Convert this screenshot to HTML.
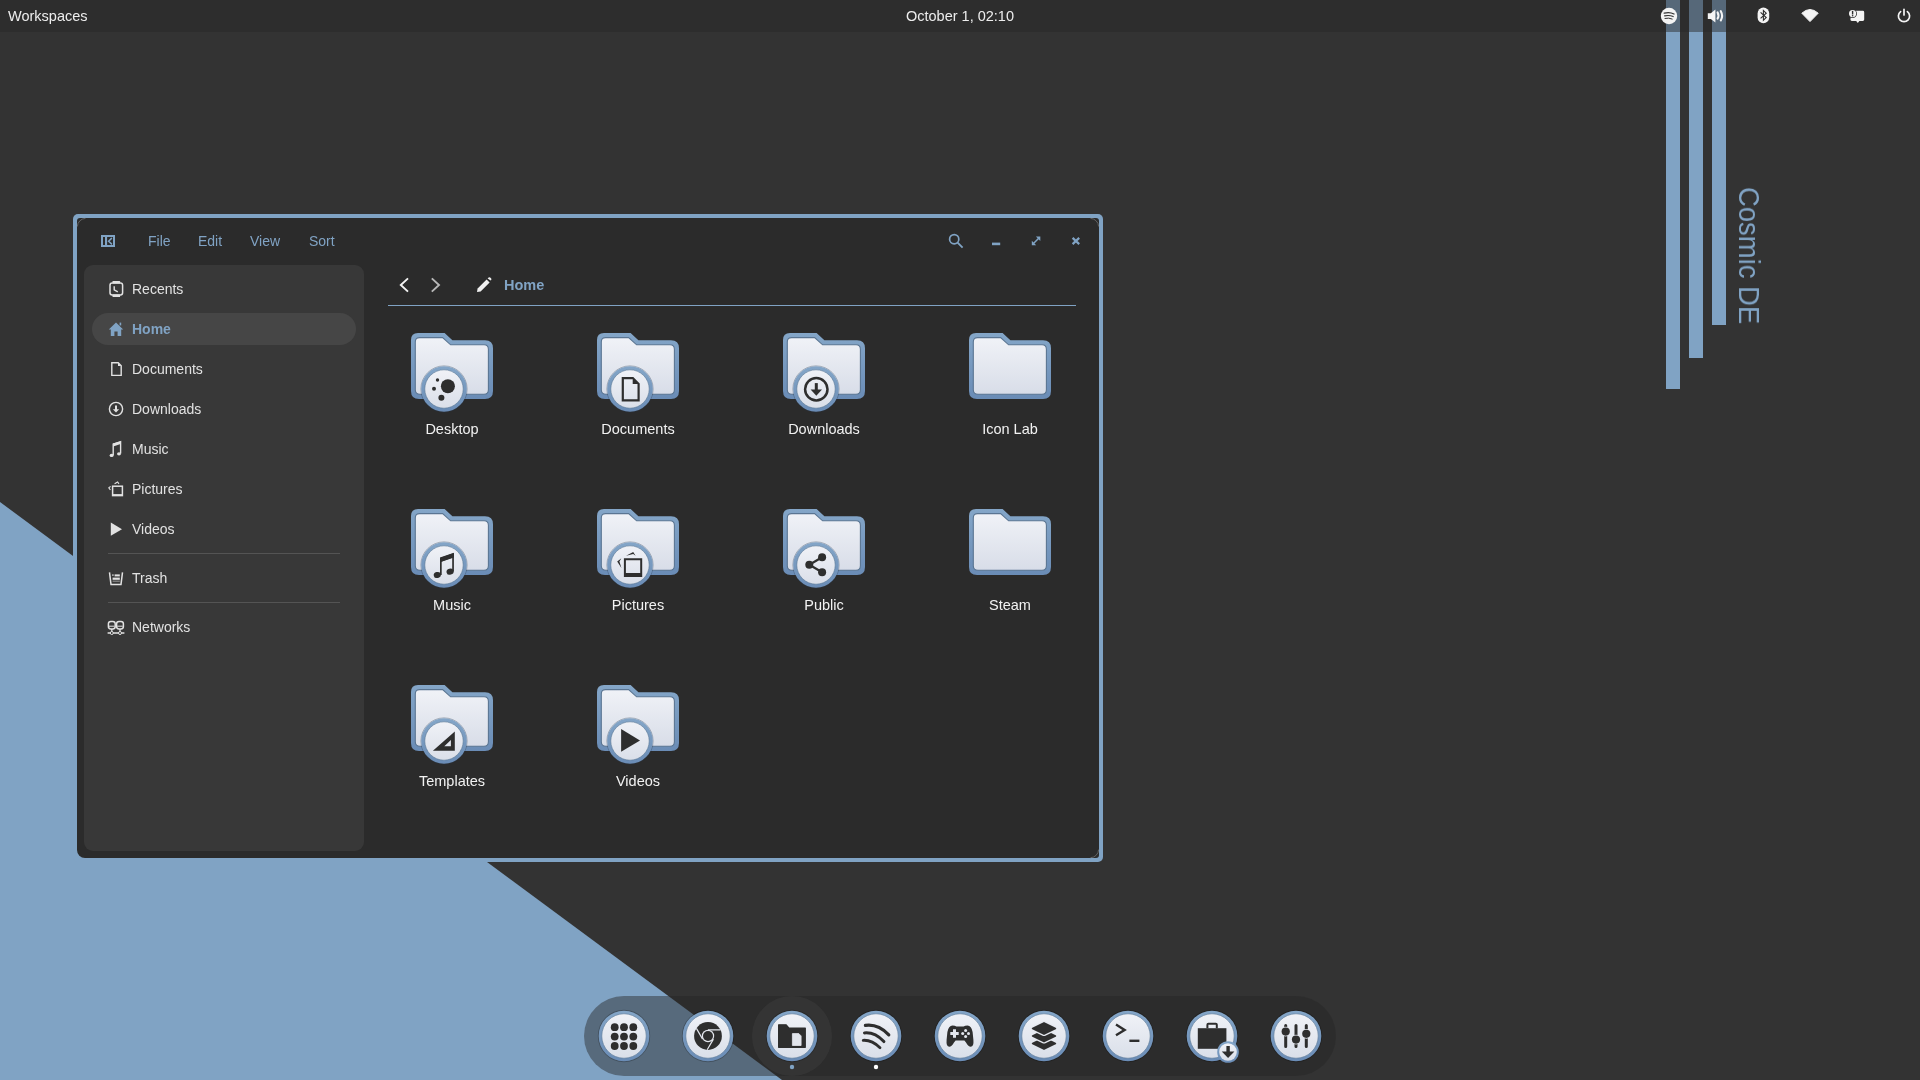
<!DOCTYPE html><html><head><meta charset="utf-8"><style>
*{margin:0;padding:0;box-sizing:border-box}
html,body{width:1920px;height:1080px;overflow:hidden;background:#333333;font-family:"Liberation Sans",sans-serif}
.tx{position:absolute;line-height:1;white-space:nowrap;will-change:transform}
svg{position:absolute;overflow:visible}
</style></head><body>
<svg style="left:0;top:0" width="1920" height="1080">
<polygon points="0,502 782,1080 0,1080" fill="#80a3c4"/>
<rect x="1666" y="0" width="14" height="389" fill="#80a3c4"/>
<rect x="1689" y="0" width="14" height="358" fill="#80a3c4"/>
<rect x="1712" y="0" width="14" height="325" fill="#80a3c4"/>
</svg>
<div class="tx" style="left:1762.5px;top:186.5px;font-size:29px;color:#80a3c4;transform-origin:0 0;transform:rotate(90deg) scaleX(0.946)">Cosmic DE</div>
<div style="position:absolute;left:0;top:0;width:1920px;height:32px;background:rgba(40,40,40,0.48)"></div>
<div class="tx" style="left:7.50px;top:8.93px;font-size:14.5px;color:#ededed;font-weight:normal;">Workspaces</div>
<div class="tx" style="left:0;width:1920px;text-align:center;top:8.93px;font-size:14.5px;color:#ededed">October 1, 02:10</div>
<svg style="left:0;top:0" width="1920" height="32">
<circle cx="1669" cy="16" r="8.2" fill="#f4f4f4"/>
<path d="M1664.2,13.2 Q1669.5,11.6 1674,14.0" stroke="#333" stroke-width="1.3" fill="none" stroke-linecap="round"/>
<path d="M1664.6,15.9 Q1669.2,14.7 1673.2,16.6" stroke="#333" stroke-width="1.1" fill="none" stroke-linecap="round"/>
<path d="M1665.0,18.4 Q1668.8,17.5 1672.2,19.0" stroke="#333" stroke-width="1.0" fill="none" stroke-linecap="round"/>
<path d="M1707.8,13.2 h3 l4.6,-3.6 v13 l-4.6,-3.6 h-3 z" fill="#f4f4f4"/>
<path d="M1717.6,12.4 q1.7,3.1 0,6.2" stroke="#f4f4f4" stroke-width="2.1" fill="none" stroke-linecap="round"/>
<path d="M1720.8,11.2 q2.6,4.6 0,9.2" stroke="#f4f4f4" stroke-width="2.1" fill="none" stroke-linecap="round"/>
<rect x="1757.6" y="7.6" width="11.6" height="15.6" rx="5.8" fill="#f4f4f4"/>
<path d="M1760.6,12.4 L1766.2,17.6 L1763.4,20.2 V10.6 L1766.2,13.2 L1760.6,18.4" stroke="#2e2e2e" stroke-width="1.1" fill="none" stroke-linejoin="miter"/>
<path d="M1801.8,13.2 Q1810,5.8 1818.2,13.2 L1810,21.6 Z" fill="#f4f4f4" stroke="#f4f4f4" stroke-width="1" stroke-linejoin="round"/>
<path d="M1851.4,12.2 a1.4,1.4 0 0 1 1.4,-1.4 h10 a1.4,1.4 0 0 1 1.4,1.4 v7.4 a1.4,1.4 0 0 1 -1.4,1.4 h-3.4 l-1.6,2 l-1.6,-2 h-4.4 a1.4,1.4 0 0 1 -1.4,-1.4 z" fill="#f4f4f4"/>
<circle cx="1852.6" cy="13.6" r="4.4" fill="#2e2e2e"/>
<circle cx="1852.6" cy="13.6" r="3.6" fill="#f4f4f4"/>
<rect x="1851.9" y="10.9" width="1.4" height="3.6" fill="#2e2e2e"/><rect x="1851.9" y="15.1" width="1.4" height="1.3" fill="#2e2e2e"/>
<path d="M1900.6,11.6 A5.6,5.6 0 1 0 1907.4,11.6" stroke="#f4f4f4" stroke-width="1.7" fill="none" stroke-linecap="round"/>
<path d="M1904,9.4 V15" stroke="#f4f4f4" stroke-width="1.7" stroke-linecap="round"/>
</svg>
<div style="position:absolute;left:73px;top:214px;width:1030px;height:648px;background:#80a3c4;border-radius:5px"></div>
<div style="position:absolute;left:77px;top:218px;width:1022px;height:640px;background:#2b2b2b;border-radius:3px 3px 3px 8px"></div>
<svg style="left:0;top:0" width="1" height="1"><path d="M77.4,226.5 A8.3,8.3 0 0 1 85.5,218.4" stroke="#6a6a6a" stroke-width="0.9" fill="none"/><path d="M1090.5,218.4 A8.3,8.3 0 0 1 1098.6,226.5" stroke="#6a6a6a" stroke-width="0.9" fill="none"/><path d="M1098.6,849.6 A8.3,8.3 0 0 1 1090.5,857.7" stroke="#6a6a6a" stroke-width="0.9" fill="none"/></svg>
<div style="position:absolute;left:84px;top:265px;width:280px;height:586px;background:#383838;border-radius:9px"></div>
<svg style="left:0;top:0" width="1" height="1">
<path d="M101,235 H115 V247 H101 Z M103,237 V245 H105 V237 Z M107.1,237 V245 H113 V237 Z" fill="#80a3c4" fill-rule="evenodd"/>
<path d="M111.5,238.4 L108.6,241.2 L111.5,243.9" stroke="#80a3c4" stroke-width="1.5" fill="none" stroke-linecap="round"/>
</svg>
<div class="tx" style="left:147.50px;top:234.15px;font-size:14px;color:#80a3c4;font-weight:normal;">File</div>
<div class="tx" style="left:198.00px;top:234.15px;font-size:14px;color:#80a3c4;font-weight:normal;">Edit</div>
<div class="tx" style="left:250.20px;top:234.15px;font-size:14px;color:#80a3c4;font-weight:normal;">View</div>
<div class="tx" style="left:308.80px;top:234.15px;font-size:14px;color:#80a3c4;font-weight:normal;">Sort</div>
<svg style="left:0;top:0" width="1" height="1">
<circle cx="954.2" cy="239.2" r="4.6" fill="none" stroke="#80a3c4" stroke-width="1.7"/>
<path d="M957.6,242.6 L962.6,247.6" stroke="#80a3c4" stroke-width="1.9"/>
<rect x="992" y="242.6" width="8.2" height="2.6" fill="#80a3c4"/>
<path d="M1033.2,243.8 L1039,238" stroke="#80a3c4" stroke-width="1.5"/>
<path d="M1031.8,240.8 V245.2 H1036.2 Z" fill="#80a3c4"/>
<path d="M1040.3,241 V236.6 H1035.9 Z" fill="#80a3c4"/>
<path d="M1072.6,237.9 L1079.2,244.1 M1079.2,237.9 L1072.6,244.1" stroke="#80a3c4" stroke-width="2.2"/>
</svg>
<div style="position:absolute;left:92px;top:313px;width:264px;height:32px;background:#464646;border-radius:16px"></div>
<svg style="left:0;top:0" width="1" height="1"><rect x="110" y="283" width="12.6" height="12" rx="2.2" fill="none" stroke="#e2e2e2" stroke-width="1.5"/><rect x="112.5" y="281" width="7.6" height="2.6" rx="0.6" fill="#e2e2e2"/><rect x="112.5" y="294.4" width="7.6" height="2.6" rx="0.6" fill="#e2e2e2"/><path d="M114.2,286.2 V289.8 L117.8,291.8" stroke="#e2e2e2" stroke-width="1.4" fill="none"/><path d="M108.8,329.4 L116,322.4 L123.2,329.4 H121.2 V336 H117.6 V331.6 H114.4 V336 H110.8 V329.4 Z" fill="#80a3c4"/><rect x="119.6" y="322.6" width="1.6" height="2.8" fill="#80a3c4"/><path d="M111.8,362.8 H118.2 L121.2,365.8 V375.4 H111.8 Z" fill="none" stroke="#e2e2e2" stroke-width="1.4"/><path d="M118,362.8 L121.2,366 H118 Z" fill="#e2e2e2"/><circle cx="116" cy="409" r="6.6" fill="none" stroke="#e2e2e2" stroke-width="1.4"/><path d="M116,405.4 V410" stroke="#e2e2e2" stroke-width="2"/><path d="M112.8,409.2 H119.2 L116,412.6 Z" fill="#e2e2e2"/><path d="M113.2,444.2 L120.6,441.8 V453.6" stroke="#e2e2e2" stroke-width="1.4" fill="none"/><path d="M113.2,443.6 V455.2" stroke="#e2e2e2" stroke-width="1.4"/><path d="M113.2,443.4 L120.6,441.2 V444 L113.2,446.4 Z" fill="#e2e2e2"/><ellipse cx="111.6" cy="455.4" rx="2" ry="1.6" fill="#e2e2e2"/><ellipse cx="119" cy="453.8" rx="2" ry="1.6" fill="#e2e2e2"/><rect x="112.6" y="486.2" width="9.8" height="9.4" fill="none" stroke="#e2e2e2" stroke-width="1.5"/><path d="M112.6,495 H122.4" stroke="#e2e2e2" stroke-width="1.8"/><path d="M114.6,483.8 L117.6,482 L119,483.8" stroke="#e2e2e2" stroke-width="1.1" fill="none"/><path d="M110.6,486.4 L108.8,487.8 L110.4,490" stroke="#e2e2e2" stroke-width="1.1" fill="none"/><path d="M110.8,522.6 L122,529.2 L110.8,535.8 Z" fill="#e2e2e2"/><path d="M109.5,572.4 L111,584.4 H121 L122.5,572.4" stroke="#e2e2e2" stroke-width="1.5" fill="none"/><rect x="112.2" y="574.4" width="1.4" height="1.4" fill="#e2e2e2"/><rect x="114.6" y="574.4" width="5.2" height="2" fill="#e2e2e2"/><rect x="112.6" y="577.6" width="7.2" height="2.2" fill="#e2e2e2"/><rect x="112.6" y="580.8" width="7.2" height="0.6" fill="#e2e2e2"/><rect x="108.4" y="621.4" width="6.8" height="7.6" rx="2.4" fill="none" stroke="#e2e2e2" stroke-width="1.5"/><rect x="116.6" y="621.4" width="6.8" height="7.6" rx="2.4" fill="none" stroke="#e2e2e2" stroke-width="1.5"/><path d="M109,626.2 H114.6 M117.2,626.2 H122.8" stroke="#e2e2e2" stroke-width="1"/><path d="M111.8,629 V632 M120,629 V632 M107.6,633 H124.4" stroke="#e2e2e2" stroke-width="1.3"/><circle cx="111.8" cy="633" r="1.5" fill="#383838" stroke="#e2e2e2" stroke-width="1"/><circle cx="120" cy="633" r="1.5" fill="#383838" stroke="#e2e2e2" stroke-width="1"/><rect x="108" y="553" width="232" height="1" fill="#545454"/><rect x="108" y="602" width="232" height="1" fill="#545454"/></svg>
<div class="tx" style="left:131.60px;top:282.15px;font-size:14px;color:#e2e2e2;font-weight:normal;">Recents</div>
<div class="tx" style="left:131.60px;top:322.15px;font-size:14px;color:#80a3c4;font-weight:bold;">Home</div>
<div class="tx" style="left:131.60px;top:362.15px;font-size:14px;color:#e2e2e2;font-weight:normal;">Documents</div>
<div class="tx" style="left:131.60px;top:402.15px;font-size:14px;color:#e2e2e2;font-weight:normal;">Downloads</div>
<div class="tx" style="left:131.60px;top:442.15px;font-size:14px;color:#e2e2e2;font-weight:normal;">Music</div>
<div class="tx" style="left:131.60px;top:482.15px;font-size:14px;color:#e2e2e2;font-weight:normal;">Pictures</div>
<div class="tx" style="left:131.60px;top:522.15px;font-size:14px;color:#e2e2e2;font-weight:normal;">Videos</div>
<div class="tx" style="left:131.60px;top:571.15px;font-size:14px;color:#e2e2e2;font-weight:normal;">Trash</div>
<div class="tx" style="left:131.60px;top:620.15px;font-size:14px;color:#e2e2e2;font-weight:normal;">Networks</div>
<svg style="left:0;top:0" width="1" height="1">
<path d="M408,278.4 L400.8,285 L408,291.6" stroke="#f4f4f4" stroke-width="1.9" fill="none"/>
<path d="M431.8,278.4 L439,285 L431.8,291.6" stroke="#b8b8b8" stroke-width="1.9" fill="none"/>
<path d="M477,292 L477.6,288.4 L486.6,279.4 L489.6,282.4 L480.6,291.4 Z" fill="#f0f0f0"/>
<path d="M487.6,278.4 L488.6,277.4 Q489.4,276.8 490.2,277.6 L491.2,278.6 Q491.8,279.4 491,280.2 L490.6,280.6 Z" fill="#f0f0f0"/>
<rect x="388" y="305" width="688" height="1" fill="#80a3c4"/>
</svg>
<div class="tx" style="left:504.20px;top:277.93px;font-size:14.5px;color:#80a3c4;font-weight:bold;">Home</div>
<svg width="0" height="0" style="position:absolute">
<defs>
<linearGradient id="fg" x1="0" y1="0" x2="0" y2="1"><stop offset="0" stop-color="#f0f2f7"/><stop offset="1" stop-color="#d8dde8"/></linearGradient>
<linearGradient id="fb" x1="0" y1="0" x2="0" y2="1"><stop offset="0" stop-color="#84a6c8"/><stop offset="1" stop-color="#6a8cb6"/></linearGradient>
<linearGradient id="eg" x1="0" y1="0" x2="0" y2="1"><stop offset="0" stop-color="#f0f2f7"/><stop offset="1" stop-color="#dadfe9"/></linearGradient>
</defs></svg>
<svg style="left:0;top:0" width="1" height="1"><g transform="translate(411,333)"><path d="M0,7 Q0,0 7,0 L33.6,0 L41.4,7.2 L74,7.2 Q82,7.2 82,15.2 L82,58 Q82,66 74,66 L8,66 Q0,66 0,58 Z" fill="url(#fb)"/><path d="M4.3,9 Q4.3,4.6 8.7,4.6 L31.6,4.6 L39.6,11.8 L73,11.8 Q77.4,11.8 77.4,16.2 L77.4,56.8 Q77.4,61.3 73,61.3 L9,61.3 Q4.3,61.3 4.3,56.8 Z" fill="url(#fg)" stroke="#5a7592" stroke-width="1.1"/></g><g transform="translate(444,389)"><circle cx="0" cy="0" r="23.1" fill="none" stroke="rgba(40,55,75,0.35)" stroke-width="1"/><circle cx="0" cy="0" r="22.8" fill="url(#fb)"/><circle cx="0" cy="0" r="19.2" fill="url(#eg)" stroke="#5c7896" stroke-width="0.6"/></g><g transform="translate(444,389)"><circle cx="3.9" cy="-2.75" r="7" fill="#2e2e2e"/><circle cx="-6.5" cy="-9" r="1.7" fill="#2e2e2e"/><circle cx="-10" cy="-0.25" r="2" fill="#2e2e2e"/><circle cx="-2.6" cy="8.7" r="3" fill="#2e2e2e"/></g><g transform="translate(597,333)"><path d="M0,7 Q0,0 7,0 L33.6,0 L41.4,7.2 L74,7.2 Q82,7.2 82,15.2 L82,58 Q82,66 74,66 L8,66 Q0,66 0,58 Z" fill="url(#fb)"/><path d="M4.3,9 Q4.3,4.6 8.7,4.6 L31.6,4.6 L39.6,11.8 L73,11.8 Q77.4,11.8 77.4,16.2 L77.4,56.8 Q77.4,61.3 73,61.3 L9,61.3 Q4.3,61.3 4.3,56.8 Z" fill="url(#fg)" stroke="#5a7592" stroke-width="1.1"/></g><g transform="translate(630,389)"><circle cx="0" cy="0" r="23.1" fill="none" stroke="rgba(40,55,75,0.35)" stroke-width="1"/><circle cx="0" cy="0" r="22.8" fill="url(#fb)"/><circle cx="0" cy="0" r="19.2" fill="url(#eg)" stroke="#5c7896" stroke-width="0.6"/></g><g transform="translate(630,389)"><path d="M-8.3,-12 H3.3 L9.7,-5.6 V12.4 H-8.3 Z M-6.1,-9.8 V10.2 H7.5 V-5 H2.7 V-9.8 Z" fill="#2e2e2e" fill-rule="evenodd"/></g><g transform="translate(783,333)"><path d="M0,7 Q0,0 7,0 L33.6,0 L41.4,7.2 L74,7.2 Q82,7.2 82,15.2 L82,58 Q82,66 74,66 L8,66 Q0,66 0,58 Z" fill="url(#fb)"/><path d="M4.3,9 Q4.3,4.6 8.7,4.6 L31.6,4.6 L39.6,11.8 L73,11.8 Q77.4,11.8 77.4,16.2 L77.4,56.8 Q77.4,61.3 73,61.3 L9,61.3 Q4.3,61.3 4.3,56.8 Z" fill="url(#fg)" stroke="#5a7592" stroke-width="1.1"/></g><g transform="translate(816,389)"><circle cx="0" cy="0" r="23.1" fill="none" stroke="rgba(40,55,75,0.35)" stroke-width="1"/><circle cx="0" cy="0" r="22.8" fill="url(#fb)"/><circle cx="0" cy="0" r="19.2" fill="url(#eg)" stroke="#5c7896" stroke-width="0.6"/></g><g transform="translate(816,389)"><circle cx="0.3" cy="0.2" r="11.2" fill="none" stroke="#2e2e2e" stroke-width="2.5"/><rect x="-1.2" y="-5.9" width="3" height="7" fill="#2e2e2e"/><path d="M-5.4,0.4 H6 L0.3,6.8 Z" fill="#2e2e2e"/></g><g transform="translate(969,333)"><path d="M0,7 Q0,0 7,0 L33.6,0 L41.4,7.2 L74,7.2 Q82,7.2 82,15.2 L82,58 Q82,66 74,66 L8,66 Q0,66 0,58 Z" fill="url(#fb)"/><path d="M4.3,9 Q4.3,4.6 8.7,4.6 L31.6,4.6 L39.6,11.8 L73,11.8 Q77.4,11.8 77.4,16.2 L77.4,56.8 Q77.4,61.3 73,61.3 L9,61.3 Q4.3,61.3 4.3,56.8 Z" fill="url(#fg)" stroke="#5a7592" stroke-width="1.1"/></g><g transform="translate(411,509)"><path d="M0,7 Q0,0 7,0 L33.6,0 L41.4,7.2 L74,7.2 Q82,7.2 82,15.2 L82,58 Q82,66 74,66 L8,66 Q0,66 0,58 Z" fill="url(#fb)"/><path d="M4.3,9 Q4.3,4.6 8.7,4.6 L31.6,4.6 L39.6,11.8 L73,11.8 Q77.4,11.8 77.4,16.2 L77.4,56.8 Q77.4,61.3 73,61.3 L9,61.3 Q4.3,61.3 4.3,56.8 Z" fill="url(#fg)" stroke="#5a7592" stroke-width="1.1"/></g><g transform="translate(444,565)"><circle cx="0" cy="0" r="23.1" fill="none" stroke="rgba(40,55,75,0.35)" stroke-width="1"/><circle cx="0" cy="0" r="22.8" fill="url(#fb)"/><circle cx="0" cy="0" r="19.2" fill="url(#eg)" stroke="#5c7896" stroke-width="0.6"/></g><g transform="translate(444,565)"><path d="M-4,-7 L9.9,-12 V6.6 L8.2,6.6 V-7.3 L-2.3,-3.6 V10 H-4 Z" fill="#2e2e2e"/><path d="M-4,-7.6 L9.9,-12.2 V-7.4 L-4,-2.8 Z" fill="#2e2e2e"/><ellipse cx="-6.7" cy="10" rx="3.6" ry="3" transform="rotate(-15 -6.7 10)" fill="#2e2e2e"/><ellipse cx="6.1" cy="6.7" rx="3.6" ry="3" transform="rotate(-15 6.1 6.7)" fill="#2e2e2e"/></g><g transform="translate(597,509)"><path d="M0,7 Q0,0 7,0 L33.6,0 L41.4,7.2 L74,7.2 Q82,7.2 82,15.2 L82,58 Q82,66 74,66 L8,66 Q0,66 0,58 Z" fill="url(#fb)"/><path d="M4.3,9 Q4.3,4.6 8.7,4.6 L31.6,4.6 L39.6,11.8 L73,11.8 Q77.4,11.8 77.4,16.2 L77.4,56.8 Q77.4,61.3 73,61.3 L9,61.3 Q4.3,61.3 4.3,56.8 Z" fill="url(#fg)" stroke="#5a7592" stroke-width="1.1"/></g><g transform="translate(630,565)"><circle cx="0" cy="0" r="23.1" fill="none" stroke="rgba(40,55,75,0.35)" stroke-width="1"/><circle cx="0" cy="0" r="22.8" fill="url(#fb)"/><circle cx="0" cy="0" r="19.2" fill="url(#eg)" stroke="#5c7896" stroke-width="0.6"/></g><g transform="translate(630,565)"><path d="M-6.1,-6.7 H12.2 V11.9 H-6.1 Z M-4.1,-4.7 V8 H10.2 V-4.7 Z" fill="#2e2e2e" fill-rule="evenodd"/><path d="M-3.9,-9.2 L3.2,-12.9 L5.6,-9.2 L3.2,-11 Z" fill="#2e2e2e"/><path d="M-8.6,-6.7 L-12.8,-3.6 L-8.6,3.1 L-10.6,-3.4 Z" fill="#2e2e2e"/></g><g transform="translate(783,509)"><path d="M0,7 Q0,0 7,0 L33.6,0 L41.4,7.2 L74,7.2 Q82,7.2 82,15.2 L82,58 Q82,66 74,66 L8,66 Q0,66 0,58 Z" fill="url(#fb)"/><path d="M4.3,9 Q4.3,4.6 8.7,4.6 L31.6,4.6 L39.6,11.8 L73,11.8 Q77.4,11.8 77.4,16.2 L77.4,56.8 Q77.4,61.3 73,61.3 L9,61.3 Q4.3,61.3 4.3,56.8 Z" fill="url(#fg)" stroke="#5a7592" stroke-width="1.1"/></g><g transform="translate(816,565)"><circle cx="0" cy="0" r="23.1" fill="none" stroke="rgba(40,55,75,0.35)" stroke-width="1"/><circle cx="0" cy="0" r="22.8" fill="url(#fb)"/><circle cx="0" cy="0" r="19.2" fill="url(#eg)" stroke="#5c7896" stroke-width="0.6"/></g><g transform="translate(816,565)"><path d="M6.1,-7.8 L-6.7,-0.3 L6.1,7.2" stroke="#2e2e2e" stroke-width="2.2" fill="none"/><circle cx="6.1" cy="-7.8" r="4" fill="#2e2e2e"/><circle cx="-6.7" cy="-0.3" r="4" fill="#2e2e2e"/><circle cx="6.1" cy="7.2" r="4" fill="#2e2e2e"/></g><g transform="translate(969,509)"><path d="M0,7 Q0,0 7,0 L33.6,0 L41.4,7.2 L74,7.2 Q82,7.2 82,15.2 L82,58 Q82,66 74,66 L8,66 Q0,66 0,58 Z" fill="url(#fb)"/><path d="M4.3,9 Q4.3,4.6 8.7,4.6 L31.6,4.6 L39.6,11.8 L73,11.8 Q77.4,11.8 77.4,16.2 L77.4,56.8 Q77.4,61.3 73,61.3 L9,61.3 Q4.3,61.3 4.3,56.8 Z" fill="url(#fg)" stroke="#5a7592" stroke-width="1.1"/></g><g transform="translate(411,685)"><path d="M0,7 Q0,0 7,0 L33.6,0 L41.4,7.2 L74,7.2 Q82,7.2 82,15.2 L82,58 Q82,66 74,66 L8,66 Q0,66 0,58 Z" fill="url(#fb)"/><path d="M4.3,9 Q4.3,4.6 8.7,4.6 L31.6,4.6 L39.6,11.8 L73,11.8 Q77.4,11.8 77.4,16.2 L77.4,56.8 Q77.4,61.3 73,61.3 L9,61.3 Q4.3,61.3 4.3,56.8 Z" fill="url(#fg)" stroke="#5a7592" stroke-width="1.1"/></g><g transform="translate(444,741)"><circle cx="0" cy="0" r="23.1" fill="none" stroke="rgba(40,55,75,0.35)" stroke-width="1"/><circle cx="0" cy="0" r="22.8" fill="url(#fb)"/><circle cx="0" cy="0" r="19.2" fill="url(#eg)" stroke="#5c7896" stroke-width="0.6"/></g><g transform="translate(444,741)"><path d="M-11.1,9.7 L10.8,-9.4 V9.7 Z M0.3,5.3 H6.9 V-1.1 Z" fill="#2e2e2e" fill-rule="evenodd"/></g><g transform="translate(597,685)"><path d="M0,7 Q0,0 7,0 L33.6,0 L41.4,7.2 L74,7.2 Q82,7.2 82,15.2 L82,58 Q82,66 74,66 L8,66 Q0,66 0,58 Z" fill="url(#fb)"/><path d="M4.3,9 Q4.3,4.6 8.7,4.6 L31.6,4.6 L39.6,11.8 L73,11.8 Q77.4,11.8 77.4,16.2 L77.4,56.8 Q77.4,61.3 73,61.3 L9,61.3 Q4.3,61.3 4.3,56.8 Z" fill="url(#fg)" stroke="#5a7592" stroke-width="1.1"/></g><g transform="translate(630,741)"><circle cx="0" cy="0" r="23.1" fill="none" stroke="rgba(40,55,75,0.35)" stroke-width="1"/><circle cx="0" cy="0" r="22.8" fill="url(#fb)"/><circle cx="0" cy="0" r="19.2" fill="url(#eg)" stroke="#5c7896" stroke-width="0.6"/></g><g transform="translate(630,741)"><path d="M-8.9,-11.9 L10,-0.6 L-8.9,10.8 Z" fill="#2e2e2e"/></g></svg>
<div class="tx" style="left:359px;width:186px;text-align:center;top:421.73px;font-size:14.5px;color:#f2f2f2">Desktop</div>
<div class="tx" style="left:545px;width:186px;text-align:center;top:421.73px;font-size:14.5px;color:#f2f2f2">Documents</div>
<div class="tx" style="left:731px;width:186px;text-align:center;top:421.73px;font-size:14.5px;color:#f2f2f2">Downloads</div>
<div class="tx" style="left:917px;width:186px;text-align:center;top:421.73px;font-size:14.5px;color:#f2f2f2">Icon Lab</div>
<div class="tx" style="left:359px;width:186px;text-align:center;top:597.73px;font-size:14.5px;color:#f2f2f2">Music</div>
<div class="tx" style="left:545px;width:186px;text-align:center;top:597.73px;font-size:14.5px;color:#f2f2f2">Pictures</div>
<div class="tx" style="left:731px;width:186px;text-align:center;top:597.73px;font-size:14.5px;color:#f2f2f2">Public</div>
<div class="tx" style="left:917px;width:186px;text-align:center;top:597.73px;font-size:14.5px;color:#f2f2f2">Steam</div>
<div class="tx" style="left:359px;width:186px;text-align:center;top:773.73px;font-size:14.5px;color:#f2f2f2">Templates</div>
<div class="tx" style="left:545px;width:186px;text-align:center;top:773.73px;font-size:14.5px;color:#f2f2f2">Videos</div>
<div style="position:absolute;left:584px;top:996px;width:752px;height:80px;border-radius:40px;background:rgba(38,38,38,0.455)"></div>
<div style="position:absolute;left:752px;top:996px;width:80px;height:80px;border-radius:40px;background:rgba(70,70,70,0.35)"></div>
<svg style="left:0;top:0" width="1" height="1"><circle cx="624" cy="1036" r="25.6" fill="none" stroke="rgba(0,0,0,0.22)" stroke-width="1.2"/><circle cx="624" cy="1036" r="25.3" fill="url(#fb)"/><circle cx="624" cy="1036" r="22.2" fill="url(#eg)" stroke="#5c7896" stroke-width="0.6"/><g transform="translate(624,1036)"><circle cx="-9.3" cy="-8.8" r="3.9" fill="#2e2e2e"/><circle cx="-9.3" cy="0.6" r="3.9" fill="#2e2e2e"/><circle cx="-9.3" cy="10" r="3.9" fill="#2e2e2e"/><circle cx="0" cy="-8.8" r="3.9" fill="#2e2e2e"/><circle cx="0" cy="0.6" r="3.9" fill="#2e2e2e"/><circle cx="0" cy="10" r="3.9" fill="#2e2e2e"/><circle cx="9.3" cy="-8.8" r="3.9" fill="#2e2e2e"/><circle cx="9.3" cy="0.6" r="3.9" fill="#2e2e2e"/><circle cx="9.3" cy="10" r="3.9" fill="#2e2e2e"/></g><circle cx="708" cy="1036" r="25.6" fill="none" stroke="rgba(0,0,0,0.22)" stroke-width="1.2"/><circle cx="708" cy="1036" r="25.3" fill="url(#fb)"/><circle cx="708" cy="1036" r="22.2" fill="url(#eg)" stroke="#5c7896" stroke-width="0.6"/><g transform="translate(708,1036)"><circle cx="0" cy="0" r="13.9" fill="#2e2e2e"/><circle cx="0" cy="0" r="6.2" fill="#e4e7ee"/><circle cx="0" cy="0" r="5" fill="#2e2e2e"/><path d="M0,-6.2 H12.4 M5.4,3.1 L-0.8,13.8 M-5.4,3.1 L-11.6,-7.6" stroke="#e4e7ee" stroke-width="1.2"/></g><circle cx="792" cy="1036" r="25.6" fill="none" stroke="rgba(0,0,0,0.22)" stroke-width="1.2"/><circle cx="792" cy="1036" r="25.3" fill="url(#fb)"/><circle cx="792" cy="1036" r="22.2" fill="url(#eg)" stroke="#5c7896" stroke-width="0.6"/><g transform="translate(792,1036)"><path d="M-13.4,-11.2 H-5.8 L-3.2,-8 H13.3 V11.3 H-13.4 Z" fill="#2e2e2e" stroke="#2e2e2e" stroke-width="1.2" stroke-linejoin="round"/><path d="M0.4,-2.4 H6.8 L9.1,-0.1 V9.5 H0.4 Z" fill="#e2e5ec" stroke="#e2e5ec" stroke-width="0.8" stroke-linejoin="round"/></g><circle cx="876" cy="1036" r="25.6" fill="none" stroke="rgba(0,0,0,0.22)" stroke-width="1.2"/><circle cx="876" cy="1036" r="25.3" fill="url(#fb)"/><circle cx="876" cy="1036" r="22.2" fill="url(#eg)" stroke="#5c7896" stroke-width="0.6"/><g transform="translate(876,1036)"><path d="M-10.6,-10.6 Q2,-12.4 12.8,-1.2" stroke="#2e2e2e" stroke-width="3.2" fill="none" stroke-linecap="round"/><path d="M-11.5,-3.1 Q-1,-4 7.9,5.6" stroke="#2e2e2e" stroke-width="3" fill="none" stroke-linecap="round"/><path d="M-12.8,4.3 Q-4,3.8 4,11.8" stroke="#2e2e2e" stroke-width="2.8" fill="none" stroke-linecap="round"/></g><circle cx="960" cy="1036" r="25.6" fill="none" stroke="rgba(0,0,0,0.22)" stroke-width="1.2"/><circle cx="960" cy="1036" r="25.3" fill="url(#fb)"/><circle cx="960" cy="1036" r="22.2" fill="url(#eg)" stroke="#5c7896" stroke-width="0.6"/><g transform="translate(960,1036)"><path d="M-7.5,-10.6 Q-11.4,-10.6 -12.6,-4 L-13.4,4 Q-14,10.8 -10.6,10.8 Q-8.6,10.8 -6,6.4 L-4.4,4.6 H4.4 L6,6.4 Q8.6,10.8 10.6,10.8 Q14,10.8 13.4,4 L12.6,-4 Q11.4,-10.6 7.5,-10.6 Q5,-10.6 3.6,-9.6 H-3.6 Q-5,-10.6 -7.5,-10.6 Z" fill="#2e2e2e"/><path d="M-9.7,-2.5 H-1.3 M-5.5,-6.7 V1.7" stroke="#e4e7ee" stroke-width="3"/><circle cx="5.6" cy="-5.4" r="1.5" fill="#e4e7ee"/><circle cx="5.6" cy="0.4" r="1.5" fill="#e4e7ee"/><circle cx="2.7" cy="-2.5" r="1.5" fill="#e4e7ee"/><circle cx="8.5" cy="-2.5" r="1.5" fill="#e4e7ee"/></g><circle cx="1044" cy="1036" r="25.6" fill="none" stroke="rgba(0,0,0,0.22)" stroke-width="1.2"/><circle cx="1044" cy="1036" r="25.3" fill="url(#fb)"/><circle cx="1044" cy="1036" r="22.2" fill="url(#eg)" stroke="#5c7896" stroke-width="0.6"/><g transform="translate(1044,1036)"><path d="M-11.3,7.5 L0,2 L11.3,7.5 L0,13 Z" fill="#2e2e2e" stroke="#2e2e2e" stroke-width="1.8" stroke-linejoin="round"/><path d="M-11.3,0 L0,-5.5 L11.3,0 L0,5.5 Z" fill="#e6e9f0" stroke="#e6e9f0" stroke-width="4.2" stroke-linejoin="round"/><path d="M-11.3,0 L0,-5.5 L11.3,0 L0,5.5 Z" fill="#2e2e2e" stroke="#2e2e2e" stroke-width="1.8" stroke-linejoin="round"/><path d="M-11.3,-7.5 L0,-13 L11.3,-7.5 L0,-2 Z" fill="#e6e9f0" stroke="#e6e9f0" stroke-width="4.2" stroke-linejoin="round"/><path d="M-11.3,-7.5 L0,-13 L11.3,-7.5 L0,-2 Z" fill="#2e2e2e" stroke="#2e2e2e" stroke-width="1.8" stroke-linejoin="round"/></g><circle cx="1128" cy="1036" r="25.6" fill="none" stroke="rgba(0,0,0,0.22)" stroke-width="1.2"/><circle cx="1128" cy="1036" r="25.3" fill="url(#fb)"/><circle cx="1128" cy="1036" r="22.2" fill="url(#eg)" stroke="#5c7896" stroke-width="0.6"/><g transform="translate(1128,1036)"><path d="M-12,-11.4 L-3.4,-6.1 L-12,-0.8" stroke="#2e2e2e" stroke-width="2.4" fill="none"/><rect x="1.4" y="3.6" width="10" height="2.4" fill="#2e2e2e"/></g><circle cx="1212" cy="1036" r="25.6" fill="none" stroke="rgba(0,0,0,0.22)" stroke-width="1.2"/><circle cx="1212" cy="1036" r="25.3" fill="url(#fb)"/><circle cx="1212" cy="1036" r="22.2" fill="url(#eg)" stroke="#5c7896" stroke-width="0.6"/><g transform="translate(1212,1036)"><rect x="-14.2" y="-7.8" width="28.6" height="20.6" fill="#2e2e2e"/><path d="M-4.6,-7.8 V-11.2 Q-4.6,-12.2 -3.6,-12.2 H3.8 Q4.8,-12.2 4.8,-11.2 V-7.8" stroke="#2e2e2e" stroke-width="2" fill="none"/></g><circle cx="1296" cy="1036" r="25.6" fill="none" stroke="rgba(0,0,0,0.22)" stroke-width="1.2"/><circle cx="1296" cy="1036" r="25.3" fill="url(#fb)"/><circle cx="1296" cy="1036" r="22.2" fill="url(#eg)" stroke="#5c7896" stroke-width="0.6"/><g transform="translate(1296,1036)"><path d="M-10.3,-10.4 V10.6 M0,-10.4 V10.6 M10.3,-10.4 V10.6" stroke="#2e2e2e" stroke-width="3" stroke-linecap="round"/><circle cx="-10.3" cy="-4.4" r="4.9" fill="#e4e7ee"/><circle cx="0" cy="3.6" r="4.9" fill="#e4e7ee"/><circle cx="10.3" cy="-2.2" r="4.9" fill="#e4e7ee"/><circle cx="-10.3" cy="-4.4" r="4.1" fill="#2e2e2e"/><circle cx="0" cy="3.6" r="4.1" fill="#2e2e2e"/><circle cx="10.3" cy="-2.2" r="4.1" fill="#2e2e2e"/></g><circle cx="1228" cy="1052" r="10.8" fill="url(#fb)"/><circle cx="1228" cy="1052" r="8.8" fill="url(#eg)"/><rect x="1226.4" y="1046" width="3.4" height="6.5" fill="#2e2e2e"/><path d="M1221.8,1051.6 H1234.4 L1228.1,1058 Z" fill="#2e2e2e"/><circle cx="792" cy="1067" r="2.2" fill="#80a3c4"/><circle cx="876" cy="1067" r="2.2" fill="#ffffff"/></svg>
</body></html>
